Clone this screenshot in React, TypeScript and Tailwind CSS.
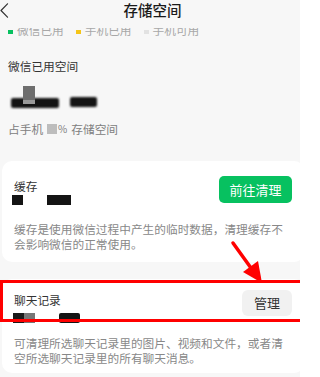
import React from "react";

export default function App() {
  return (
    <div className="relative w-[300px] h-[377px] overflow-hidden bg-[#f7f7f7] font-['Noto_Sans_CJK_SC','Noto_Sans',sans-serif]">
      {/* Header */}
      <div className="relative z-10 h-[28px] bg-[#f7f7f7] flex justify-center pl-[5px]">
        <svg className="absolute left-0 top-[3px]" width="9" height="15" viewBox="0 0 9 15">
          <path d="M7.5 0.8 L1 7.5 L7.5 14.2" fill="none" stroke="#333" strokeWidth="1.2" strokeLinecap="round" strokeLinejoin="round" />
        </svg>
        <span className="text-[14.5px] leading-[20px] font-medium text-[#1a1a1a]">存储空间</span>
      </div>

      {/* Clipped legend row */}
      <div className="h-[8px] overflow-hidden">
        <div className="-mt-[4px] flex items-center pl-[8px] text-[11.7px] leading-[12px] text-[#a8a8a8]">
          <span className="w-[5px] h-[4px] bg-[#07c160] mt-[4px]" />
          <span className="ml-[4px]">微信已用</span>
          <span className="ml-[12px] w-[5px] h-[4px] bg-[#f5c518] mt-[4px]" />
          <span className="ml-[4px]">手机已用</span>
          <span className="ml-[12px] w-[5px] h-[4px] bg-[#e2e2e2] mt-[4px]" />
          <span className="ml-[4px]">手机可用</span>
        </div>
      </div>

      {/* WeChat used space */}
      <div className="pl-[8px]">
        <div className="mt-[22px] text-[11.7px] leading-[16px] text-[#333]">微信已用空间</div>
        <div className="mt-[12px] h-[24px] flex items-end pl-[3px]">
          <div className="relative w-[48px] h-[10px] mb-[2px]">
            <div className="absolute inset-0 bg-[#141414] rounded-[2px] blur-[1px]" />
            <div className="absolute left-[12px] -top-[12px] w-[12px] h-[14px] bg-[#6e6e6e] blur-[0.5px]" />
            <div className="absolute left-[12px] top-[2px] w-[12px] h-[4px] bg-[#9a9a9a] blur-[0.5px]" />
          </div>
          <div className="ml-[11px] w-[27px] h-[10px] mb-[3px] bg-[#141414] rounded-[2px] blur-[1px]" />
        </div>
        <div className="mt-[11px] flex items-center text-[11.7px] leading-[16px] text-[#808080]">
          <span>占手机</span>
          <span className="ml-[4px] w-[10px] h-[10px] bg-[#bdbdbd]" />
          <span className="ml-[1px] text-[10px]">%</span>
          <span className="ml-[4px]">存储空间</span>
        </div>
      </div>

      {/* Cache card */}
      <div className="mt-[24px] ml-[2px] w-[302px] bg-white rounded-[10px] pl-[12px] pr-[12px] pt-[15px] pb-[11px]">
        <div className="flex items-start justify-between">
          <div className="mt-[2px]">
            <div className="text-[11.7px] leading-[16px] text-[#333]">缓存</div>
            <div className="mt-[1px] flex -ml-[2px]">
              <div className="w-[11px] h-[10px] bg-[#141414] blur-[0.6px]" />
              <div className="ml-[24px] w-[24px] h-[10px] bg-[#141414] blur-[0.6px]" />
            </div>
          </div>
          <div className="w-[73px] h-[27px] rounded-[5px] bg-[#07c160] flex items-center justify-center text-white text-[13px] leading-[16px]">
            前往清理
          </div>
        </div>
        <div className="mt-[16px] w-[272px] text-[11.7px] leading-[15px] text-[#888]">
          缓存是使用微信过程中产生的临时数据，清理缓存不会影响微信的正常使用。
        </div>
      </div>

      {/* Chat records card */}
      <div className="relative mt-[17px] ml-[2px] w-[302px] bg-white rounded-[10px] pl-[12px] pr-[12px] pt-[11px] pb-[8px]">
        <div className="flex items-start justify-between">
          <div className="mt-[2px]">
            <div className="text-[11.7px] leading-[16px] text-[#333]">聊天记录</div>
            <div className="mt-[5px] flex -ml-[1px]">
              <div className="w-[11px] h-[10px] bg-[#1a1a1a] blur-[0.6px]" />
              <div className="w-[11px] h-[10px] bg-[#777] blur-[0.6px]" />
              <div className="ml-[24px] w-[21px] h-[10px] bg-[#141414] rounded-[2px] blur-[0.6px]" />
            </div>
          </div>
          <div className="w-[50px] h-[26px] rounded-[6px] bg-[#f1f1f1] flex items-center justify-center text-[#333] text-[13px] leading-[16px]">
            管理
          </div>
        </div>
        <div className="mt-[12px] w-[272px] text-[11.7px] leading-[15px] text-[#888]">
          可清理所选聊天记录里的图片、视频和文件，或者清空所选聊天记录里的所有聊天消息。
        </div>
        {/* Red highlight box */}
        <div className="absolute -left-[2px] top-[1px] w-[312px] h-[42px] border-[3px] border-[#ff0000]" />
      </div>

      {/* Red arrow */}
      <svg className="absolute left-0 top-0 pointer-events-none" width="300" height="377" viewBox="0 0 300 377">
        <line x1="233" y1="243" x2="251" y2="268" stroke="#ff0000" strokeWidth="3.5" strokeLinecap="round" />
        <polygon points="262,283 243,272 258,261" fill="#ff0000" />
      </svg>
    </div>
  );
}
